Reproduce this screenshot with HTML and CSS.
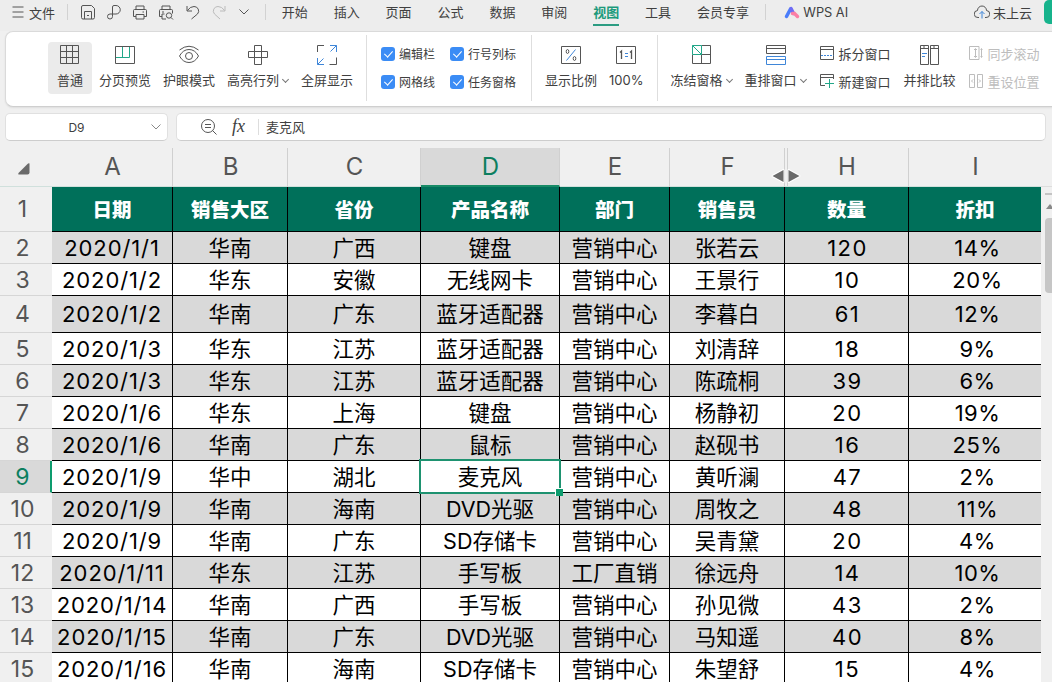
FILE: index.html
```html
<!DOCTYPE html>
<html lang="zh-CN">
<head>
    <meta charset="UTF-8">
    <meta name="viewport" content="width=device-width, initial-scale=1.0">
    <title>WPS 表格</title>
    <link rel="stylesheet" href="styles.css">
</head>
<body>
    <div class="app">
        <!-- Menu bar -->
        <div class="menubar">
            <div class="file-menu">
                <svg width="12" height="12" viewBox="0 0 12 12"><path d="M.5 1h11M.5 6h11M.5 11h11"/></svg>
                <span>文件</span>
            </div>
            <span class="divider"></span>
            <div class="quick-icons">
                <svg width="14" height="15" viewBox="0 0 14 15"><path d="M.5 2Q.5.5 2 .5h8.500l3 3V12.500q0 1.500-1.500 1.500H2Q.5 14 .5 12.500zM3.500 14V6.500h7V14M6 10.500h2"/></svg>
                <svg width="14" height="15" viewBox="0 0 14 15"><path d="M5.500 11.500V2Q5.500.5 7 .5h2a4 4 0 0 1 0 8.500H3a2.500 2.500 0 1 0 2.500 2.500"/></svg>
                <svg width="14" height="15" viewBox="0 0 14 15"><path d="M3 4V1h8v3M3 11.500H.5V5.500Q.5 4.500 1.500 4.500h11q1 0 1 1v6H11M3 9.500h8V14H3zM9.500 7H11"/></svg>
                <svg width="15" height="15" viewBox="0 0 15 15"><path d="M3 4V1h8v3M3 11.500H.5V5.500Q.5 4.500 1.500 4.500h11q1 0 1 1v3M7 14H3V9h2.500M3 7h2M12 12.500l2 2"/><circle cx="10" cy="10.500" r="2.700"/></svg>
                <svg width="14" height="15" viewBox="0 0 14 15"><path d="M1 1v5h5M1.500 5.500Q4 1.500 8 1.500a4.500 4.500 0 0 1 3.500 7.500L5.500 14"/></svg>
                <svg class="faded" width="14" height="15" viewBox="0 0 14 15"><path d="M13 1v5H8M12.500 5.500Q10 1.500 6 1.500A4.500 4.500 0 0 0 2.500 9L8 14"/></svg>
                <svg class="more" width="10" height="6" viewBox="0 0 10 6"><path d="M.5.5L5 5 9.500.5"/></svg>
            </div>
            <span class="divider"></span>
            <div class="tabs">
                <span>开始</span>
                <span>插入</span>
                <span>页面</span>
                <span>公式</span>
                <span>数据</span>
                <span>审阅</span>
                <span class="active">视图</span>
                <span>工具</span>
                <span>会员专享</span>
            </div>
            <span class="divider"></span>
            <div class="wps-ai">
                <svg width="16" height="13" viewBox="0 0 16 13">
                    <path class="ai-blue" d="M2.500 10.500L6.500 3"/>
                    <path class="ai-violet" d="M7 2.500L9.500 7.500"/>
                    <path class="ai-pink" d="M8.500 7.500h2L13.500 10.500"/>
                </svg>
                <span>WPS AI</span>
            </div>
            <div class="cloud">
                <svg width="16" height="14" viewBox="0 0 16 14"><path d="M5 12.500H4A3.500 3.500 0 0 1 3.500 5.500a4.500 4.500 0 0 1 9 0A3.500 3.500 0 0 1 12 12.500h-1"/><path class="blue" d="M8 13.500v-7M5.500 9L8 6.500 10.500 9"/></svg>
                <span>未上云</span>
            </div>
            <div class="share"></div>
        </div>

        <!-- Ribbon -->
        <div class="ribbon">
            <div class="tool selected">
                <svg width="20" height="20" viewBox="0 0 20 20"><path d="M.5.5h18v18H.5zM6.500.5v18M12.500.5v18M.5 6.500h18M.5 12.500h18"/></svg>
                <span>普通</span>
            </div>
            <div class="tool">
                <svg width="20" height="20" viewBox="0 0 20 20"><path d="M.5 1.500h19v17H.5z"/><path class="green" d="M1 12.500h13.500V2M7.500 2v10.500"/></svg>
                <span>分页预览</span>
            </div>
            <div class="tool">
                <svg width="20" height="20" viewBox="0 0 20 20"><path d="M.5 5Q10-2.500 19.500 5M.5 11Q4 4.500 10 4.500T19.500 11Q16 17.500 10 17.500T.5 11z"/><circle cx="10" cy="11" r="3.500"/></svg>
                <span>护眼模式</span>
            </div>
            <div class="tool">
                <svg width="20" height="20" viewBox="0 0 20 20"><path d="M6.500.5h7v19h-7zM.5 6.500h19v6H.5z"/></svg>
                <span>高亮行列<i class="arrow"></i></span>
            </div>
            <div class="tool">
                <svg width="20" height="20" viewBox="0 0 20 20"><path d="M.5 7V.5H7M19.500 12.500v7h-7"/><path class="blue" d="M13 .5h6.500V7M19.500.5l-6 6M.5 13v6.500H7M.5 19.500l6-6"/></svg>
                <span>全屏显示</span>
            </div>
            <span class="line"></span>
            <div class="checks">
                <label><i class="box"></i>编辑栏</label>
                <label><i class="box"></i>行号列标</label>
                <label><i class="box"></i>网格线</label>
                <label><i class="box"></i>任务窗格</label>
            </div>
            <span class="line"></span>
            <div class="tool">
                <svg width="20" height="20" viewBox="0 0 20 20"><path d="M.5 1.500h19v17H.5z"/><path class="blue" d="M14.500 4.500l-9 11"/><ellipse cx="6.500" cy="6.500" rx="1.300" ry="2"/><ellipse cx="13.500" cy="13.500" rx="1.300" ry="2"/></svg>
                <span>显示比例</span>
            </div>
            <div class="tool">
                <svg width="20" height="20" viewBox="0 0 20 20"><path d="M.5 1.500h19v17H.5z"/><path class="bold" d="M4 7.500L5.500 6v8M14 7.500L15.500 6v8"/><path class="blue" d="M9 8.500h3M9 11.500h3"/></svg>
                <span>100%</span>
            </div>
            <span class="line"></span>
            <div class="tool">
                <svg width="20" height="20" viewBox="0 0 20 20"><path d="M9.500.5h9v18H.5v-9M9.500 9.500h9M9.500 9.500v9"/><path class="green" d="M.5.5h9v9h-9zM.5.5l9 9"/></svg>
                <span>冻结窗格<i class="arrow"></i></span>
            </div>
            <div class="tool">
                <svg width="20" height="20" viewBox="0 0 20 20"><path d="M.5.5h19v8H.5zM.5 3.500h19"/><path class="blue" d="M.5 11.500h19v8H.5zM.5 14.500h19"/></svg>
                <span>重排窗口<i class="arrow"></i></span>
            </div>
            <div class="small-tools">
                <span><svg width="14" height="14" viewBox="0 0 14 14"><path d="M.5.5h13v13H.5zM.5 3.500h13"/><path class="blue dash" d="M1 9.500h12.500"/></svg>拆分窗口</span>
                <span><svg width="14" height="14" viewBox="0 0 14 14"><path d="M5 11.500H.5V.5h13V5M.5 3.500h13"/><path class="green" d="M5 9.500h9M9.500 5v9"/></svg>新建窗口</span>
            </div>
            <div class="tool">
                <svg width="20" height="20" viewBox="0 0 20 20"><path d="M.5.5h8v19h-8zM.5 3.500h8M10.500.5h8v19h-8zM10.500 3.500h8M3 2h2M13 2h2"/><path class="blue" d="M2 8.500h5M2 11.500h3"/></svg>
                <span>并排比较</span>
            </div>
            <div class="small-tools disabled">
                <span><svg width="14" height="14" viewBox="0 0 14 14"><path d="M10 .5H.5v13H10zM6.500 3v8M5 4l1.500-1.500L8 4M5 10l1.500 1.500L8 10M12.500 3v8M11.500 3.500l1-1 1 1M11.500 10.500l1 1 1-1"/></svg>同步滚动</span>
                <span><svg width="14" height="14" viewBox="0 0 14 14"><path d="M.5.5h5v13h-5zM8.500.5h5v13h-5zM4 5.500L2.500 7 4 8.500M10 5.500L11.500 7 10 8.500"/></svg>重设位置</span>
            </div>
        </div>

        <!-- Formula bar -->
        <div class="formula-bar">
            <div class="name-box">
                <span>D9</span>
                <svg width="10" height="6" viewBox="0 0 10 6"><path d="M.5.5L5 5 9.500.5"/></svg>
            </div>
            <div class="formula-input">
                <svg width="16" height="16" viewBox="0 0 16 16"><circle cx="7" cy="7" r="6.500"/><path d="M4 5.500h6M4 8.500h6M11.500 11.500l4 4"/></svg>
                <span class="fx">fx</span>
                <span class="formula-text">麦克风</span>
            </div>
        </div>

        <!-- Sheet -->
        <div class="sheet">
            <table class="grid">
                <colgroup>
                    <col class="col-num"><col class="col-a"><col class="col-b"><col class="col-c"><col class="col-d"><col class="col-e"><col class="col-f"><col class="col-h"><col class="col-i">
                </colgroup>
                <thead>
                    <tr class="letters">
                        <th class="corner"><svg width="12" height="12" viewBox="0 0 12 12"><path d="M11.500.5v9q0 2-2 2h-9q-.5-.5 0-1.500l9-9q1-1 2-.5z"/></svg></th>
                        <th>A</th>
                        <th>B</th>
                        <th>C</th>
                        <th class="current">D</th>
                        <th>E</th>
                        <th>F
                            <svg class="resize" width="30" height="16" viewBox="0 0 30 16"><path d="M1.500 8l11-6v12zM28.500 8l-11-6v12z"/></svg>
                        </th>
                        <th class="after-hidden">H</th>
                        <th>I</th>
                    </tr>
                    <tr class="titles">
                        <th class="num">1</th>
                        <td>日期</td>
                        <td>销售大区</td>
                        <td>省份</td>
                        <td>产品名称</td>
                        <td>部门</td>
                        <td>销售员</td>
                        <td>数量</td>
                        <td>折扣</td>
                    </tr>
                </thead>
                <tbody id="rows"></tbody>
            </table>
            <div class="scrollbar">
                <div class="scroll-split"></div>
                <div class="scroll-up"></div>
                <div class="scroll-thumb"></div>
            </div>
        </div>
    </div>
    <script>
        const records = [
            ['2020/1/1', '华南', '广西', '键盘', '营销中心', '张若云', '120', '14%'],
            ['2020/1/2', '华东', '安徽', '无线网卡', '营销中心', '王景行', '10', '20%'],
            ['2020/1/2', '华南', '广东', '蓝牙适配器', '营销中心', '李暮白', '61', '12%'],
            ['2020/1/3', '华东', '江苏', '蓝牙适配器', '营销中心', '刘清辞', '18', '9%'],
            ['2020/1/3', '华东', '江苏', '蓝牙适配器', '营销中心', '陈疏桐', '39', '6%'],
            ['2020/1/6', '华东', '上海', '键盘', '营销中心', '杨静初', '20', '19%'],
            ['2020/1/6', '华南', '广东', '鼠标', '营销中心', '赵砚书', '16', '25%'],
            ['2020/1/9', '华中', '湖北', '麦克风', '营销中心', '黄听澜', '47', '2%'],
            ['2020/1/9', '华南', '海南', 'DVD光驱', '营销中心', '周牧之', '48', '11%'],
            ['2020/1/9', '华南', '广东', 'SD存储卡', '营销中心', '吴青黛', '20', '4%'],
            ['2020/1/11', '华东', '江苏', '手写板', '工厂直销', '徐远舟', '14', '10%'],
            ['2020/1/14', '华南', '广西', '手写板', '营销中心', '孙见微', '43', '2%'],
            ['2020/1/15', '华南', '广东', 'DVD光驱', '营销中心', '马知遥', '40', '8%'],
            ['2020/1/16', '华南', '海南', 'SD存储卡', '营销中心', '朱望舒', '15', '4%']
        ];
        const activeRow = 9;
        const activeColumn = 3; // column D
        const columnClasses = { 0: 'date', 6: 'amount', 7: 'percent' };

        const rows = document.getElementById('rows');

        records.forEach((record, index) => {
            const rowNumber = index + 2;
            const tr = document.createElement('tr');
            if (rowNumber === 4) tr.className = 'tall';

            const num = document.createElement('th');
            num.className = 'num';
            num.innerText = rowNumber;
            if (rowNumber === activeRow) num.classList.add('current');
            tr.appendChild(num);

            record.forEach((value, column) => {
                const td = document.createElement('td');
                td.innerText = value;
                if (columnClasses[column]) td.classList.add(columnClasses[column]);
                if (rowNumber === activeRow && column === activeColumn) td.classList.add('active-cell');
                tr.appendChild(td);
            });

            rows.appendChild(tr);
        });
    </script>
</body>
</html>
```
FILE: styles.css
```css
* {
    box-sizing: border-box;
}

body {
    margin: 0;
    background: #f0f0f0;
    font-family: Inter, "Noto Sans CJK SC", sans-serif;
    font-size: 13px;
    color: #404040;
    overflow: hidden;
}

.app {
    width: 1052px;
    height: 682px;
    overflow: hidden;
}

svg {
    display: block;
    flex: none;
    fill: none;
    stroke: #555;
    stroke-width: 1;
}

svg .blue {
    stroke: #3f86d8;
}

svg .green {
    stroke: #22a789;
}

svg .bold {
    stroke-width: 1.3;
}

svg .dash {
    stroke-dasharray: 2 1;
}

/* Menu bar */
.menubar {
    display: flex;
    align-items: center;
    height: 31px;
    padding: 0 0 7px 12px;
    background: #ededed;
    white-space: nowrap;
}

.file-menu {
    display: flex;
    align-items: center;
    gap: 5px;
    width: 55px;
}

.divider {
    width: 1px;
    height: 16px;
    background: #d2d2d2;
}

.quick-icons {
    display: flex;
    align-items: center;
    gap: 12px;
    width: 197px;
    padding-left: 13px;
}

.quick-icons .faded {
    stroke: #bbb;
}

.quick-icons .more {
    margin-left: 1px;
}

.tabs {
    display: flex;
    gap: 25.9px;
    width: 500px;
    padding-left: 16px;
}

.tabs .active {
    color: #1c9a7c;
    font-weight: 700;
    box-shadow: 0 2px 0 #2c9c82;
}

.tabs span {
    height: 23px;
    line-height: 23px;
}

.wps-ai {
    display: flex;
    align-items: center;
    gap: 3px;
    width: 208px;
    padding-left: 18px;
    font-size: 12.8px;
}

.wps-ai path {
    stroke-width: 3.5;
    stroke-linecap: round;
}

.wps-ai .ai-blue {
    stroke: #4a7dfa;
}

.wps-ai .ai-violet {
    stroke: #6f6cf5;
}

.wps-ai .ai-pink {
    stroke: #fb7fa5;
}

.cloud {
    display: flex;
    align-items: center;
    gap: 3px;
    width: 70px;
}

.share {
    align-self: flex-start;
    width: 8px;
    height: 24px;
    border-radius: 5px 0 0 5px;
    background: #17b38c;
}

/* Ribbon */
.ribbon {
    display: flex;
    align-items: center;
    width: 1060px;
    height: 76px;
    margin-left: 5px;
    padding-left: 42px;
    padding-bottom: 3px;
    background: #fff;
    border: 1px solid #dadada;
    border-bottom-color: #cfcfcf;
    border-radius: 8px;
    box-shadow: 0 1px 2px rgba(0, 0, 0, 0.08);
    white-space: nowrap;
}

.tool {
    display: flex;
    flex-direction: column;
    align-items: center;
    height: 52px;
    padding: 3px 6px 0;
    line-height: 18px;
}

.tool svg {
    margin-bottom: 6px;
}

.tool.selected {
    width: 44px;
    margin-right: 1px;
    background: #ebebeb;
    border-radius: 4px;
}

.arrow {
    display: inline-block;
    width: 5px;
    height: 5px;
    margin: 0 1px 3px 4px;
    border: solid #777;
    border-width: 0 1px 1px 0;
    transform: rotate(45deg);
}

.line {
    width: 1px;
    height: 66px;
    margin: 0 7px;
    background: #dedede;
}

.checks {
    display: grid;
    grid-template-columns: 69px 74px;
    gap: 10px 0;
    padding-left: 7px;
    font-size: 12px;
}

.checks label {
    display: flex;
    align-items: center;
    gap: 4px;
    height: 18px;
}

.box {
    display: flex;
    justify-content: center;
    width: 14px;
    height: 14px;
    background: #3b8cf5;
    border-radius: 3px;
}

.box::after {
    content: "";
    width: 4px;
    height: 7px;
    margin-top: 2px;
    border: solid #fff;
    border-width: 0 1.5px 1.5px 0;
    transform: rotate(42deg);
}

.small-tools {
    display: flex;
    flex-direction: column;
    gap: 10px;
    padding: 0 7px 1px;
}

.small-tools span {
    display: flex;
    align-items: center;
    gap: 5px;
    height: 18px;
}

.disabled {
    color: #bdbdbd;
}

.disabled svg {
    stroke: #bdbdbd;
}

/* Formula bar */
.formula-bar {
    display: flex;
    gap: 8px;
    padding: 6px 6px 0 5px;
    height: 41px;
}

.name-box,
.formula-input {
    display: flex;
    align-items: center;
    height: 28px;
    background: #fff;
    border: 1px solid #e0e0e0;
    border-bottom-color: #cdcdcd;
    border-radius: 5px;
}

.name-box {
    width: 163px;
    padding-right: 6px;
    font-size: 12px;
}

.name-box span {
    flex: 1;
    padding-right: 4px;
    text-align: center;
}

.name-box svg {
    stroke: #888;
}

.formula-input {
    flex: 1;
    padding-left: 24px;
}

.fx {
    width: 26px;
    margin: 0 0 1px 15px;
    font: italic 18px "Liberation Serif", serif;
}

.formula-text {
    padding-left: 7px;
    line-height: 16px;
    border-left: 1px solid #ddd;
}

/* Sheet */
.sheet {
    display: flex;
}

.grid {
    width: 1041px;
    flex: none;
    table-layout: fixed;
    border-collapse: separate;
    border-spacing: 0;
    text-align: center;
    white-space: nowrap;
}

.col-num { width: 52px; }
.col-a { width: 121px; }
.col-b { width: 115px; }
.col-c { width: 133px; }
.col-d { width: 139px; }
.col-e { width: 110px; }
.col-f { width: 115px; }
.col-h { width: 124px; }
.col-i { width: 132px; }

.grid th,
.grid td {
    padding: 0;
    line-height: 24px;
}

.letters th {
    position: relative;
    height: 39px;
    font-size: 24px;
    font-weight: 400;
    color: #555;
    border-right: 1px solid #d0d0d0;
    border-bottom: 1px solid #d0e0dc;
}

.grid .letters th {
    padding-left: 1px;
}

.letters .corner,
.letters th:last-child {
    border-right: none;
}

.letters .current {
    color: #0d7f5f;
    background: #d9d9d9;
    border-bottom: 2px solid #178a66;
}

.corner svg {
    margin: 3px 0 0 17px;
    fill: #6a6a6a;
    stroke: none;
}

.resize {
    position: absolute;
    top: 20px;
    right: -17px;
    z-index: 2;
    fill: #6b6b6b;
    stroke: #fff;
    stroke-width: 2;
    stroke-linejoin: round;
    paint-order: stroke;
}

.letters .after-hidden::before {
    content: "";
    position: absolute;
    top: 0;
    left: 2px;
    width: 1px;
    height: 38px;
    background: #d0d0d0;
}

.grid .titles td {
    height: 45px;
    padding-top: 2px;
    background: #00705a;
    color: #fff;
    font-size: 19.5px;
    font-weight: 900;
    border-right: 1px solid #000;
    border-bottom: 1px solid #000;
}

.grid .num {
    font-size: 23px;
    font-weight: 400;
    color: #555;
    padding-right: 7px;
    border-bottom: 1px solid #d6d6d6;
}

.grid .num.current {
    color: #0d7f5f;
    background: #d9d9d9;
    border-right: 2px solid #0d9c6e;
    padding-right: 5px;
}

tbody td {
    height: 32px;
    background: #fff;
    color: #000;
    font-size: 21.5px;
    border-right: 1px solid #000;
    border-bottom: 1px solid #000;
}

tbody tr:nth-child(odd) td {
    background: #d9d9d9;
}

tbody .tall td {
    height: 37px;
}

.grid td:last-child {
    border-right: none;
}

.grid .date,
.grid .amount,
.grid .percent {
    font-size: 22px;
    letter-spacing: 0.9px;
}

.grid .amount {
    padding-left: 2px;
    letter-spacing: 1.5px;
}

.grid .percent {
    padding-left: 5px;
    letter-spacing: 0.5px;
}

/* Selection frame with its fill handle */
.active-cell {
    position: relative;
}

.active-cell::before {
    content: "";
    position: absolute;
    inset: -2px;
    border: 2px solid #1e9270;
}

.active-cell::after {
    content: "";
    position: absolute;
    right: -4px;
    bottom: -4px;
    width: 7px;
    height: 7px;
    background: #0d9c6e;
    border: solid #fff;
    border-width: 1px 0 0 1px;
}

/* Scrollbar */
.scrollbar {
    flex: 1;
    margin-top: 38px;
    padding-left: 4px;
    overflow: hidden;
    border-top: 1px solid #ddd;
}

.scroll-split {
    width: 14px;
    height: 2px;
    margin-top: 6px;
    background: #c4c4c4;
}

.scroll-up {
    width: 0;
    margin: 9px 0 9px 1px;
    border: solid transparent;
    border-width: 0 4px 5px;
    border-bottom-color: #888;
}

.scroll-thumb {
    width: 14px;
    height: 75px;
    border-radius: 4px;
    background: #c6c6c6;
}
```
